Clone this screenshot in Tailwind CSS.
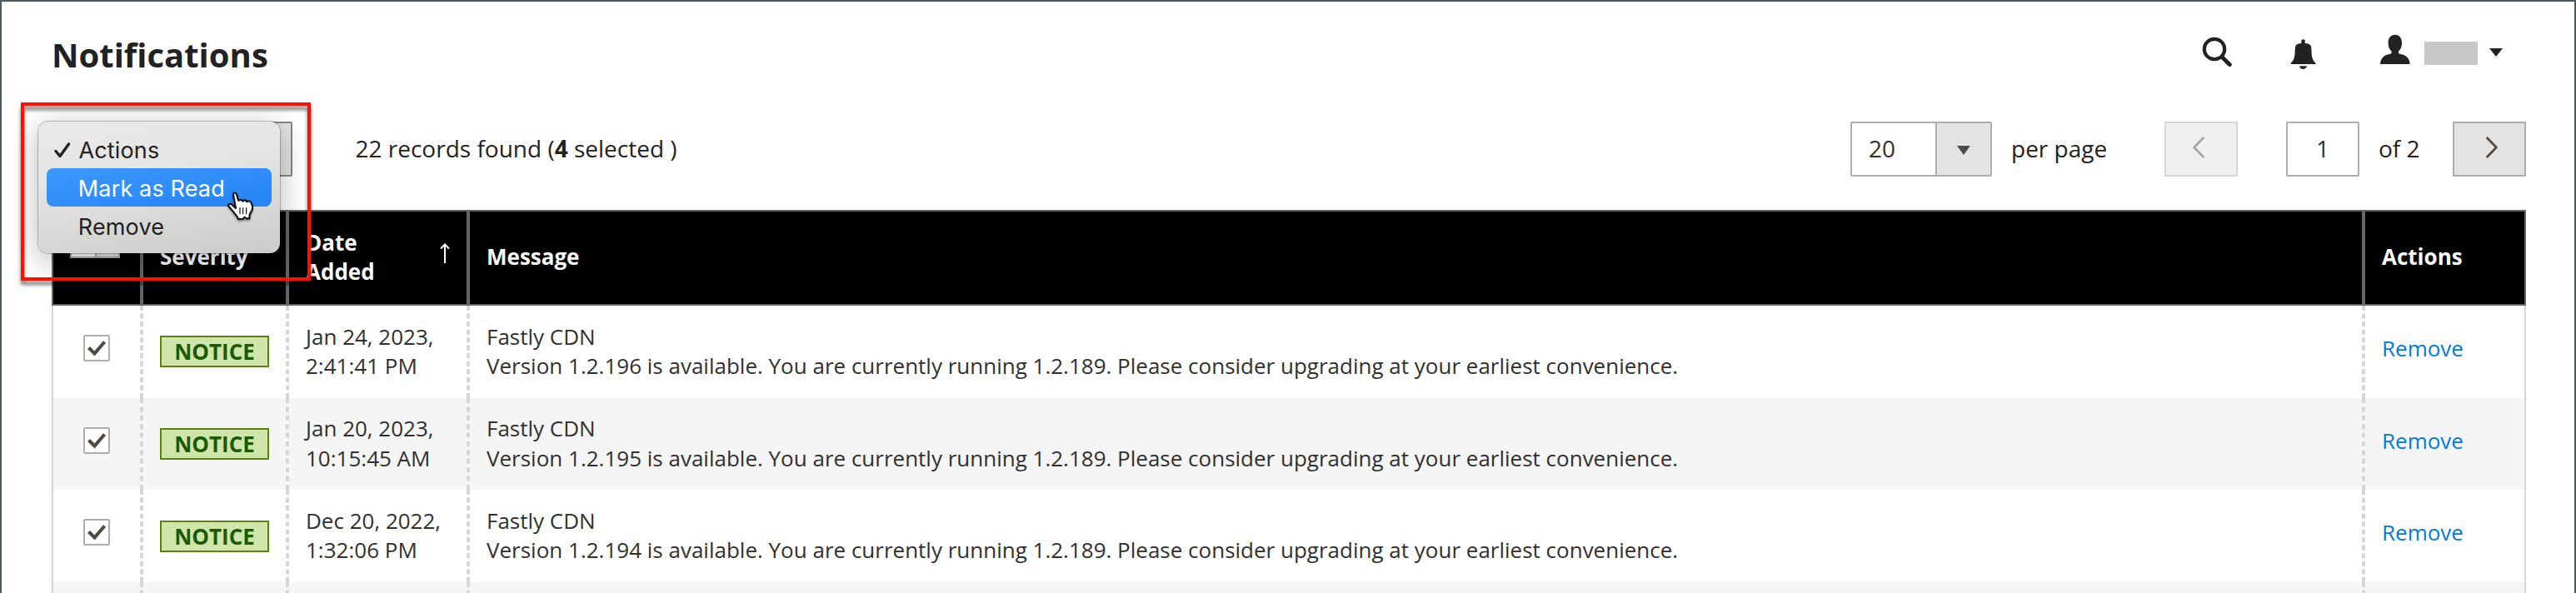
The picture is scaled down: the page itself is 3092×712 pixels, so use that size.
<!DOCTYPE html>
<html lang="en">
<head>
<meta charset="utf-8">
<title>Notifications</title>
<script src="https://cdn.jsdelivr.net/npm/@tailwindcss/browser@4"></script>
</head>
<body class="bg-white">
<div class="relative h-[712px] w-[3092px] overflow-hidden border-x-2 border-t-2 border-[#485a66] bg-white font-['Open_Sans','Noto_Sans',sans-serif] text-[#222]">

  <!-- Page header -->
  <header class="flex h-[144px] items-start justify-between pr-[86px] pl-[60px]">
    <h1 class="mt-[37px] text-[40px] leading-[54px] font-bold">Notifications</h1>
    <div class="flex items-start">
      <svg class="mt-[42px] h-9 w-9" viewBox="0 0 36 36" fill="none" stroke="#222"><circle cx="15" cy="15" r="12.2" stroke-width="4.2"/><path d="M24 24.5 33.3 33.5" stroke-width="5" stroke-linecap="round"/></svg>
      <svg class="mt-[45px] ml-[70px] h-[37px] w-8" viewBox="0 0 32 37" fill="#222"><path d="M13.3 5V2Q13.3.3 15.5.3T17.7 2V5Q23 5.2 24.6 7.8C25.4 9.5 25.5 12 25.6 16C25.8 22 27 25.500 30.700 29V30H.5V29C4.200 25.500 5.400 22 5.600 16C5.700 12 5.800 9.500 6.600 7.800Q8 5.200 13.300 5Z"/><path d="M11 32.300H20Q19 36 15.500 36T11 32.300Z"/></svg>
      <svg class="mt-[39px] ml-[76px] h-[37px] w-9" viewBox="0 0 36 37" fill="#222"><path d="M17.800.7C23 .7 26 4.500 26 10.500C26 15 24.500 18.500 22 20.500V22.500Q22 23.800 24.500 24C31 24.800 35.200 29 35.700 36H0C.5 29 4.700 24.800 11 24Q13.500 23.800 13.500 22.500V20.500C11 18.500 9.600 15 9.600 10.500C9.600 4.500 12.600.7 17.800.7Z"/></svg>
      <div class="mt-12 ml-[17px] h-7 w-16 bg-[#c7c7c7]"></div>
      <svg class="mt-14 ml-[14px] h-[10px] w-4" viewBox="0 0 16 10" fill="#222"><path d="M0 0H16L8 10Z"/></svg>
    </div>
  </header>

  <!-- Toolbar -->
  <div class="flex h-[66px] items-stretch pr-[58px] pl-[60px] text-[28px] leading-[38px]">
    <div class="w-[289px] rounded-[2px] border-2 border-[#858585] bg-[#e3e3e3]"></div>
    <div class="ml-[75.500px] flex items-center pb-[2px] whitespace-pre">22 records found (<b>4</b> selected )</div>
    <div class="ml-auto flex w-[170px] rounded-[2px] border-2 border-[#adadad] text-[#303030]">
      <div class="flex w-[100px] items-center pb-[2px] pl-5">20</div>
      <div class="flex flex-1 items-center justify-center border-l-2 border-[#adadad] bg-[#e3e3e3]"><svg class="mt-[2px] h-[11px] w-4" viewBox="0 0 16 11" fill="#514943"><path d="M0 0H16L8 11Z"/></svg></div>
    </div>
    <div class="flex w-[207px] items-center pb-[2px] pl-[23px]">per page</div>
    <div class="flex w-[88px] items-center justify-center border-2 border-[#d6d6d6] bg-[#f0f0f0]"><svg class="mr-[6px] mb-[5px] h-[26px] w-[14px]" viewBox="0 0 14 26" fill="none" stroke="#a8a4a1" stroke-width="2.700" stroke-linecap="round" stroke-linejoin="round"><path d="M12.500 1.700 1.600 13 12.500 24.300"/></svg></div>
    <div class="ml-[58px] flex w-[88px] items-center justify-center rounded-[2px] border-2 border-[#adadad] pb-[2px] text-[#303030]">1</div>
    <div class="flex w-[112px] items-center pb-[2px] pl-[23px]">of 2</div>
    <div class="flex w-[88px] items-center justify-center border-2 border-[#adadad] bg-[#e3e3e3]"><svg class="mb-[5px] ml-[6px] h-[26px] w-[14px]" viewBox="0 0 14 26" fill="none" stroke="#514943" stroke-width="2.700" stroke-linecap="round" stroke-linejoin="round"><path d="M1.500 1.700 12.400 13 1.500 24.300"/></svg></div>
  </div>

  <!-- Notification grid -->
  <div class="mt-10 ml-[60px] w-[2970px] text-[26px] leading-[35.36px] text-[#303030]">
    <div class="grid h-[115px] grid-cols-[108px_175px_217px_2275px_195px] leading-[35px] font-bold text-white">
      <div class="border-2 border-[#666] bg-black pt-6 pl-5"><div class="flex h-8 w-[60px] border-2 border-[#adadad] bg-white"><div class="flex-1"></div><div class="w-7 border-l-2 border-[#adadad] bg-[#e3e3e3]"></div></div></div>
      <div class="flex items-center border-2 border-[#666] bg-black px-5 pb-[2px]">Severity</div>
      <div class="flex items-center justify-between border-2 border-[#666] bg-black px-5 pb-[2px]"><span class="w-20">Date Added</span><svg class="mb-2 h-[25px] w-3" viewBox="0 0 12 25" fill="none" stroke="#fff" stroke-width="2"><path d="M6 24V2M1 6.500 6 1.500 11 6.500"/></svg></div>
      <div class="flex items-center border-2 border-[#666] bg-black px-5 pb-[2px]">Message</div>
      <div class="flex items-center border-2 border-[#666] bg-black px-5 pb-[2px]">Actions</div>
    </div>

    <div class="grid h-[110.72px] grid-cols-[108px_175px_217px_2275px_195px]">
      <div class="border-x-2 border-[#d6d6d6] pt-[35px] pl-9 [border-right-style:dashed]"><div class="flex h-8 w-8 rounded-[2px] border-2 border-[#adadad] bg-white"><svg class="h-7 w-7" viewBox="0 0 28 28" fill="none" stroke="#514943" stroke-width="4.200"><path d="M4.500 13.500 11.500 20.500 23.500 6.500"/></svg></div></div>
      <div class="border-x-2 border-dashed border-[#d6d6d6] pt-[36.400px] pl-5"><div class="h-[38px] w-[131px] border-2 border-[#5b8116] bg-[#d0e5a9] text-center leading-[34px] font-bold text-[#185b00]">NOTICE</div></div>
      <div class="border-x-2 border-dashed border-[#d6d6d6] pt-[19.500px] pl-5">Jan 24, 2023,<br>2:41:41 PM</div>
      <div class="border-x-2 border-dashed border-[#d6d6d6] pt-[19.500px] pl-5">Fastly CDN<br>Version 1.2.196 is available. You are currently running 1.2.189. Please consider upgrading at your earliest convenience.</div>
      <div class="border-x-2 border-[#d6d6d6] pt-[33.900px] pl-5 text-[#007bdb] [border-left-style:dashed]">Remove</div>
    </div>

    <div class="grid h-[110.72px] grid-cols-[108px_175px_217px_2275px_195px] bg-[#f5f5f5]">
      <div class="border-x-2 border-[#d6d6d6] pt-[35px] pl-9 [border-right-style:dashed]"><div class="flex h-8 w-8 rounded-[2px] border-2 border-[#adadad] bg-white"><svg class="h-7 w-7" viewBox="0 0 28 28" fill="none" stroke="#514943" stroke-width="4.200"><path d="M4.500 13.500 11.500 20.500 23.500 6.500"/></svg></div></div>
      <div class="border-x-2 border-dashed border-[#d6d6d6] pt-[36.400px] pl-5"><div class="h-[38px] w-[131px] border-2 border-[#5b8116] bg-[#d0e5a9] text-center leading-[34px] font-bold text-[#185b00]">NOTICE</div></div>
      <div class="border-x-2 border-dashed border-[#d6d6d6] pt-[19.500px] pl-5">Jan 20, 2023,<br>10:15:45 AM</div>
      <div class="border-x-2 border-dashed border-[#d6d6d6] pt-[19.500px] pl-5">Fastly CDN<br>Version 1.2.195 is available. You are currently running 1.2.189. Please consider upgrading at your earliest convenience.</div>
      <div class="border-x-2 border-[#d6d6d6] pt-[33.900px] pl-5 text-[#007bdb] [border-left-style:dashed]">Remove</div>
    </div>

    <div class="grid h-[110.72px] grid-cols-[108px_175px_217px_2275px_195px]">
      <div class="border-x-2 border-[#d6d6d6] pt-[35px] pl-9 [border-right-style:dashed]"><div class="flex h-8 w-8 rounded-[2px] border-2 border-[#adadad] bg-white"><svg class="h-7 w-7" viewBox="0 0 28 28" fill="none" stroke="#514943" stroke-width="4.200"><path d="M4.500 13.500 11.500 20.500 23.500 6.500"/></svg></div></div>
      <div class="border-x-2 border-dashed border-[#d6d6d6] pt-[36.400px] pl-5"><div class="h-[38px] w-[131px] border-2 border-[#5b8116] bg-[#d0e5a9] text-center leading-[34px] font-bold text-[#185b00]">NOTICE</div></div>
      <div class="border-x-2 border-dashed border-[#d6d6d6] pt-[19.500px] pl-5">Dec 20, 2022,<br>1:32:06 PM</div>
      <div class="border-x-2 border-dashed border-[#d6d6d6] pt-[19.500px] pl-5">Fastly CDN<br>Version 1.2.194 is available. You are currently running 1.2.189. Please consider upgrading at your earliest convenience.</div>
      <div class="border-x-2 border-[#d6d6d6] pt-[33.900px] pl-5 text-[#007bdb] [border-left-style:dashed]">Remove</div>
    </div>

    <div class="grid h-[110.72px] grid-cols-[108px_175px_217px_2275px_195px] bg-[#f5f5f5]">
      <div class="border-x-2 border-[#d6d6d6] [border-right-style:dashed]"></div>
      <div class="border-x-2 border-dashed border-[#d6d6d6]"></div>
      <div class="border-x-2 border-dashed border-[#d6d6d6]"></div>
      <div class="border-x-2 border-dashed border-[#d6d6d6]"></div>
      <div class="border-x-2 border-[#d6d6d6] [border-left-style:dashed]"></div>
    </div>
  </div>

  <!-- Open actions menu -->
  <div class="absolute top-[143.500px] left-[43.500px] h-[158.500px] w-[290.500px] rounded-[12px] bg-[linear-gradient(170deg,#e9e9e9_0%,#e4e4e3_40%,#cbcbca_100%)] p-[10px] font-[Inter,sans-serif] text-[27px] leading-[46px] tracking-[0.15px] text-[#222] shadow-[0_0_1px_1px_rgba(0,0,0,0.25),0_8px_36px_rgba(0,0,0,0.28)]">
    <div class="flex h-[46px] items-center pt-1"><svg class="mr-[10px] mb-[2px] ml-[9px] h-5 w-5" viewBox="0 0 20 20" fill="none" stroke="#222" stroke-width="3.400" stroke-linecap="round" stroke-linejoin="round"><path d="M2 11.500 7 17.500 17.500 3"/></svg>Actions</div>
    <div class="flex h-[46px] items-center rounded-[8px] bg-[linear-gradient(170deg,#3d97ff,#2484f5)] pt-1 pl-[38.300px] text-white">Mark as Read</div>
    <div class="flex h-[46px] items-center pt-1 pl-[38.300px]">Remove</div>
  </div>

  <!-- Hand pointer -->
  <svg class="absolute top-[220px] left-[262px] h-[50px] w-[60px] drop-shadow-[0_2px_1px_rgba(0,0,0,0.35)]" viewBox="0 0 180 150" fill="#fff" stroke="#111" stroke-width="6.500" stroke-linejoin="round" stroke-linecap="round"><path d="M48 36C47 27 57 26 60 34L67 57C70 52 79 52 82 59C85 53 94 54 97 61C101 56 111 58 113 66C118 74 118 84 115 92C112 99 107 103 107 110L106 121H94L89 116L83 123H66C65 115 56 108 50 99C44 90 34 82 31 76C28 68 38 66 43 71L57 84Z"/><path d="M72 83V104M83 83V104M95 83V104" stroke-width="3.500"/></svg>

  <!-- Callout frame -->
  <div class="absolute top-[121px] left-[23px] h-[214px] w-[348px] border-4 border-[#ff0f00] drop-shadow-[0_5px_2px_rgba(0,0,0,0.55)]"></div>
</div>
</body>
</html>
